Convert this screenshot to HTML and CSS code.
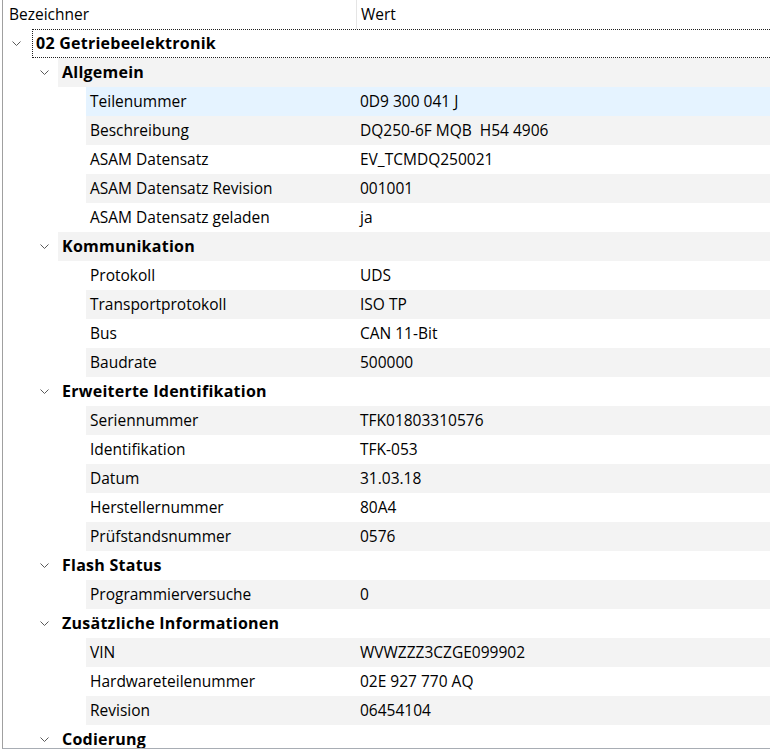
FILE: index.html
```html
<!DOCTYPE html>
<html lang="de">
<head>
  <meta charset="UTF-8" />
  <title>Steuergeräte-Info</title>
  <link rel="stylesheet" href="styles.css">
</head>
<body>
  <div class="tree">
    <div class="head">
      <div class="hcell hname">Bezeichner</div>
      <div class="hcell hvalue">Wert</div>
    </div>

    <div class="row lvl0 focus">
      <span class="twisty"><svg width="9" height="5" viewBox="0 0 9 5"><polyline points="0.5,0.5 4.5,4.5 8.5,0.5" /></svg></span>
      <div class="cells"><span class="name group">02 Getriebeelektronik</span><span class="value"></span></div>
    </div>

    <div class="row lvl1 alt">
      <span class="twisty"><svg width="9" height="5" viewBox="0 0 9 5"><polyline points="0.5,0.5 4.5,4.5 8.5,0.5" /></svg></span>
      <div class="cells"><span class="name group">Allgemein</span><span class="value"></span></div>
    </div>
    <div class="row lvl2 hover">
      <span class="twisty"></span>
      <div class="cells"><span class="name">Teilenummer</span><span class="value">0D9 300 041 J</span></div>
    </div>
    <div class="row lvl2 alt">
      <span class="twisty"></span>
      <div class="cells"><span class="name">Beschreibung</span><span class="value">DQ250-6F MQB&nbsp; H54 4906</span></div>
    </div>
    <div class="row lvl2">
      <span class="twisty"></span>
      <div class="cells"><span class="name">ASAM Datensatz</span><span class="value">EV_TCMDQ250021</span></div>
    </div>
    <div class="row lvl2 alt">
      <span class="twisty"></span>
      <div class="cells"><span class="name">ASAM Datensatz Revision</span><span class="value">001001</span></div>
    </div>
    <div class="row lvl2">
      <span class="twisty"></span>
      <div class="cells"><span class="name">ASAM Datensatz geladen</span><span class="value">ja</span></div>
    </div>

    <div class="row lvl1 alt">
      <span class="twisty"><svg width="9" height="5" viewBox="0 0 9 5"><polyline points="0.5,0.5 4.5,4.5 8.5,0.5" /></svg></span>
      <div class="cells"><span class="name group">Kommunikation</span><span class="value"></span></div>
    </div>
    <div class="row lvl2">
      <span class="twisty"></span>
      <div class="cells"><span class="name">Protokoll</span><span class="value">UDS</span></div>
    </div>
    <div class="row lvl2 alt">
      <span class="twisty"></span>
      <div class="cells"><span class="name">Transportprotokoll</span><span class="value">ISO TP</span></div>
    </div>
    <div class="row lvl2">
      <span class="twisty"></span>
      <div class="cells"><span class="name">Bus</span><span class="value">CAN 11-Bit</span></div>
    </div>
    <div class="row lvl2 alt">
      <span class="twisty"></span>
      <div class="cells"><span class="name">Baudrate</span><span class="value">500000</span></div>
    </div>

    <div class="row lvl1">
      <span class="twisty"><svg width="9" height="5" viewBox="0 0 9 5"><polyline points="0.5,0.5 4.5,4.5 8.5,0.5" /></svg></span>
      <div class="cells"><span class="name group">Erweiterte Identifikation</span><span class="value"></span></div>
    </div>
    <div class="row lvl2 alt">
      <span class="twisty"></span>
      <div class="cells"><span class="name">Seriennummer</span><span class="value">TFK01803310576</span></div>
    </div>
    <div class="row lvl2">
      <span class="twisty"></span>
      <div class="cells"><span class="name">Identifikation</span><span class="value">TFK-053</span></div>
    </div>
    <div class="row lvl2 alt">
      <span class="twisty"></span>
      <div class="cells"><span class="name">Datum</span><span class="value">31.03.18</span></div>
    </div>
    <div class="row lvl2">
      <span class="twisty"></span>
      <div class="cells"><span class="name">Herstellernummer</span><span class="value">80A4</span></div>
    </div>
    <div class="row lvl2 alt">
      <span class="twisty"></span>
      <div class="cells"><span class="name">Prüfstandsnummer</span><span class="value">0576</span></div>
    </div>

    <div class="row lvl1">
      <span class="twisty"><svg width="9" height="5" viewBox="0 0 9 5"><polyline points="0.5,0.5 4.5,4.5 8.5,0.5" /></svg></span>
      <div class="cells"><span class="name group">Flash Status</span><span class="value"></span></div>
    </div>
    <div class="row lvl2 alt">
      <span class="twisty"></span>
      <div class="cells"><span class="name">Programmierversuche</span><span class="value">0</span></div>
    </div>

    <div class="row lvl1">
      <span class="twisty"><svg width="9" height="5" viewBox="0 0 9 5"><polyline points="0.5,0.5 4.5,4.5 8.5,0.5" /></svg></span>
      <div class="cells"><span class="name group">Zusätzliche Informationen</span><span class="value"></span></div>
    </div>
    <div class="row lvl2 alt">
      <span class="twisty"></span>
      <div class="cells"><span class="name">VIN</span><span class="value">WVWZZZ3CZGE099902</span></div>
    </div>
    <div class="row lvl2">
      <span class="twisty"></span>
      <div class="cells"><span class="name">Hardwareteilenummer</span><span class="value">02E 927 770 AQ</span></div>
    </div>
    <div class="row lvl2 alt">
      <span class="twisty"></span>
      <div class="cells"><span class="name">Revision</span><span class="value">06454104</span></div>
    </div>

    <div class="row lvl1">
      <span class="twisty"><svg width="9" height="5" viewBox="0 0 9 5"><polyline points="0.5,0.5 4.5,4.5 8.5,0.5" /></svg></span>
      <div class="cells"><span class="name group">Codierung</span><span class="value"></span></div>
    </div>
  </div>
</body>
</html>
```

FILE: styles.css
```css
*, *::before, *::after {
  box-sizing: border-box;
  margin: 0;
  padding: 0;
}
html, body {
  background: #ffffff;
  font-family: 'Open Sans', 'Noto Sans', sans-serif;
  font-size: 15.5px;
  color: #000000;
  overflow: hidden;
}
.tree {
  margin-left: 2px;
  height: 749px;
  border-left: 1px solid #a0a0a0;
  border-bottom: 1px solid #a8adb4;
  overflow: hidden;
}
.head {
  display: flex;
  height: 29px;
  align-items: stretch;
}
.hcell {
  display: flex;
  align-items: center;
  padding-bottom: 1px;
}
.hname {
  width: 354px;
  padding-left: 6px;
  border-right: 1px solid #e5e5e5;
}
.hvalue {
  flex: 1;
  padding-left: 4px;
}
.row {
  display: flex;
  height: 29px;
}
.twisty {
  width: 27px;
  flex-shrink: 0;
  display: flex;
  align-items: center;
  justify-content: center;
}
.twisty svg {
  display: block;
}
.twisty polyline {
  fill: none;
  stroke: #5a5a5a;
  stroke-width: 1;
}
.lvl1 { padding-left: 28px; }
.lvl2 { padding-left: 56px; }
.cells {
  flex: 1;
  display: flex;
  align-items: center;
  white-space: nowrap;
  padding-bottom: 1px;
}
.row.alt .cells {
  background: #f3f3f3;
}
.row.hover .cells {
  background: #e5f3ff;
}
.name {
  padding-left: 4px;
  overflow: hidden;
}
.lvl0 .name { width: 324px; }
.lvl1 .name { width: 297px; }
.lvl2 .name { width: 269px; }
.name.group {
  font-weight: 700;
  font-size: 16px;
  letter-spacing: 0.25px;
}
.value {
  flex: 1;
  padding-left: 5px;
}
/* Fokusrahmen der aktuellen Zeile */
.focus .cells {
  margin-left: 2px;
  border: 1px dotted #202020;
  border-right: none;
}
.focus .name {
  padding-left: 3px;
}
```
